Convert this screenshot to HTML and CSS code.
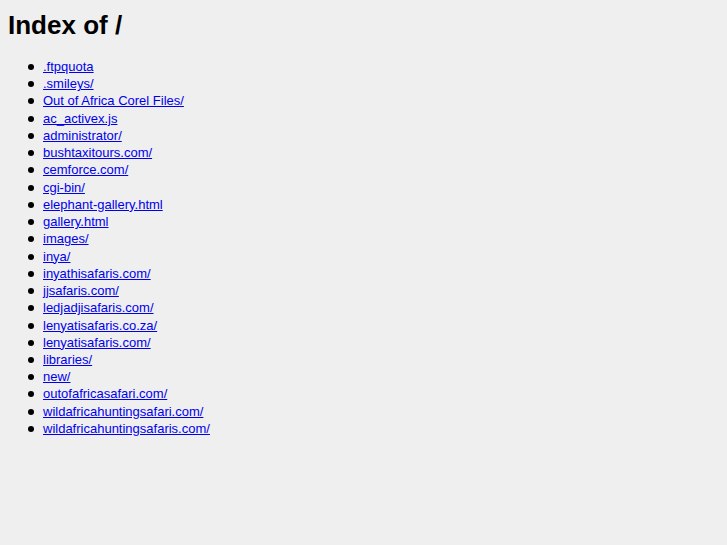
FILE: index.html
```html
<!DOCTYPE html>
<html>
<head>
<meta charset="utf-8">
<title>Index of /</title>
<link rel="stylesheet" href="styles.css">
</head>
<body>
<h1 class="title">Index of /</h1>
<ul class="listing">
<li><a href="#">.ftpquota</a></li>
<li><a href="#">.smileys/</a></li>
<li><a href="#">Out of Africa Corel Files/</a></li>
<li><a href="#">ac_activex.js</a></li>
<li><a href="#">administrator/</a></li>
<li><a href="#">bushtaxitours.com/</a></li>
<li><a href="#">cemforce.com/</a></li>
<li><a href="#">cgi-bin/</a></li>
<li><a href="#">elephant-gallery.html</a></li>
<li><a href="#">gallery.html</a></li>
<li><a href="#">images/</a></li>
<li><a href="#">inya/</a></li>
<li><a href="#">inyathisafaris.com/</a></li>
<li><a href="#">jjsafaris.com/</a></li>
<li><a href="#">ledjadjisafaris.com/</a></li>
<li><a href="#">lenyatisafaris.co.za/</a></li>
<li><a href="#">lenyatisafaris.com/</a></li>
<li><a href="#">libraries/</a></li>
<li><a href="#">new/</a></li>
<li><a href="#">outofafricasafari.com/</a></li>
<li><a href="#">wildafricahuntingsafari.com/</a></li>
<li><a href="#">wildafricahuntingsafaris.com/</a></li>
</ul>
</body>
</html>
```
FILE: styles.css
```css
html { background: #efefef; }
body {
  margin: 8px;
  font-family: "Liberation Sans", Arial, sans-serif;
  font-size: 13px;
  color: #000;
}
.title {
  font-size: 26px;
  font-weight: bold;
  line-height: 30px;
  margin: 2px 0 18px 0;
}
.listing {
  margin: 0;
  padding-left: 35px;
  list-style: none;
}
.listing li {
  line-height: 17.24px;
}
.listing li::before {
  content: "";
  display: inline-block;
  width: 6px;
  height: 6px;
  border-radius: 50%;
  background: #000;
  margin-left: -15px;
  margin-right: 9px;
  vertical-align: 1px;
}
.listing a {
  color: #0000ee;
}
```
